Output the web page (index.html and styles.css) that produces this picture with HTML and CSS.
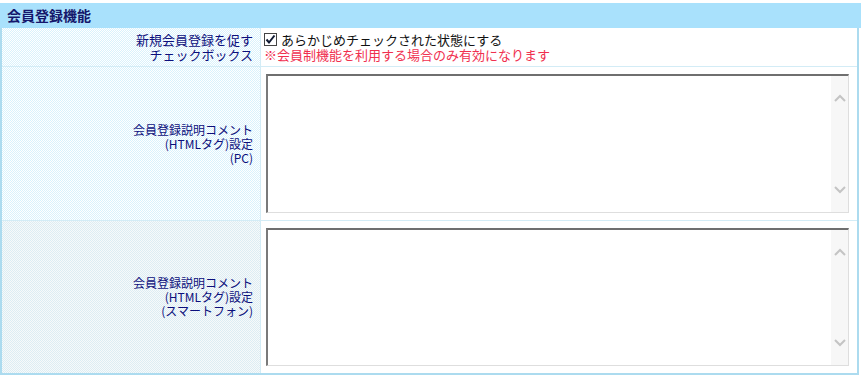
FILE: index.html
```html
<!DOCTYPE html>
<html lang="ja">
<head>
  <meta charset="UTF-8">
  <title>会員登録機能</title>
  <link rel="stylesheet" href="styles.css">
</head>
<body>

  <div class="panel">
    <h2 class="panel-title">会員登録機能</h2>

    <div class="form">
      <div class="row">
        <div class="label label-lg">新規会員登録を促す<br>チェックボックス</div>
        <div class="field field-check">
          <label class="check">
            <input type="checkbox" checked>
            <span class="box">
              <svg width="11" height="11" viewBox="0 0 11 11"><polyline points="1.5,5.5 4,8.5 9.5,1.5" fill="none" stroke="#111a33" stroke-width="2"/></svg>
            </span>
            <span>あらかじめチェックされた状態にする</span>
          </label>
          <div class="note">※会員制機能を利用する場合のみ有効になります</div>
        </div>
      </div>

      <div class="row">
        <div class="label">会員登録説明コメント<br>(HTMLタグ)設定<br>(PC)</div>
        <div class="field">
          <div class="textbox">
            <textarea></textarea>
            <div class="scroll">
              <svg width="12" height="8" viewBox="0 0 12 8"><polyline points="1,7 6,2 11,7" fill="none" stroke="#c4c4c4" stroke-width="2"/></svg>
              <svg width="12" height="8" viewBox="0 0 12 8"><polyline points="1,1 6,6 11,1" fill="none" stroke="#c4c4c4" stroke-width="2"/></svg>
            </div>
          </div>
        </div>
      </div>

      <div class="row last">
        <div class="label alt">会員登録説明コメント<br>(HTMLタグ)設定<br>(スマートフォン)</div>
        <div class="field">
          <div class="textbox short">
            <textarea></textarea>
            <div class="scroll">
              <svg width="12" height="8" viewBox="0 0 12 8"><polyline points="1,7 6,2 11,7" fill="none" stroke="#c4c4c4" stroke-width="2"/></svg>
              <svg width="12" height="8" viewBox="0 0 12 8"><polyline points="1,1 6,6 11,1" fill="none" stroke="#c4c4c4" stroke-width="2"/></svg>
            </div>
          </div>
        </div>
      </div>
    </div>
  </div>

</body>
</html>
```

FILE: styles.css
```css
body {
  margin: 0;
  background: #fff;
  font-family: "Noto Sans CJK JP", "Noto Sans", sans-serif;
}

.panel {
  width: 861px;
  padding-top: 3px;
}

.panel-title {
  margin: 0;
  height: 25px;
  padding-left: 7px;
  background: #a9e1fc;
  color: #15166b;
  font-size: 14px;
  font-weight: bold;
  line-height: 25px;
}

.form {
  width: 859px;
  box-sizing: border-box;
  border: 2px solid #acdbef;
  border-top: none;
}

.row {
  display: grid;
  grid-template-columns: 259px 1fr;
  border-bottom: 1px solid #d3ecf6;
}

.row.last {
  border-bottom: none;
}

.label {
  display: flex;
  align-items: center;
  justify-content: flex-end;
  box-sizing: border-box;
  padding: 0 7px 0 4px;
  border-right: 1px solid #d3ecf6;
  background: repeating-conic-gradient(#d9f2fc 0 25%, #fff 0 50%) 0 0 / 2px 2px;
  color: #0c0f7c;
  font-size: 12px;
  line-height: 14px;
  text-align: right;
}

.label.alt {
  background: repeating-conic-gradient(#dcedf3 0 25%, #f7f9fa 0 50%) 0 0 / 2px 2px;
}

.label-lg {
  font-size: 13px;
  line-height: 15px;
}

.field {
  padding: 7px 8px 7px 5px;
}

.field-check {
  padding: 4px 8px 4px 3px;
  font-size: 13px;
  line-height: 15px;
}

.check {
  display: flex;
  align-items: center;
  gap: 4px;
  color: #111;
}

.check input {
  display: none;
}

.box {
  display: flex;
  align-items: center;
  justify-content: center;
  width: 13px;
  height: 13px;
  box-sizing: border-box;
  border: 1px solid #444;
  background: #fff;
}

.note {
  color: #f0304f;
}

.textbox {
  display: flex;
  height: 139px;
  box-sizing: border-box;
  border-top: 2px solid #6f6f6f;
  border-left: 2px solid #7a7a7a;
  border-right: 1px solid #dedede;
  border-bottom: 1px solid #dedede;
  background: #fff;
}

.textbox.short {
  height: 138px;
}

.textbox textarea {
  flex: 1;
  border: none;
  outline: none;
  resize: none;
  padding: 2px;
  font-family: inherit;
  font-size: 12px;
}

.scroll {
  width: 17px;
  display: flex;
  flex-direction: column;
  justify-content: space-between;
  align-items: center;
  padding: 18px 0;
  background: #f7f7f7;
}
```
